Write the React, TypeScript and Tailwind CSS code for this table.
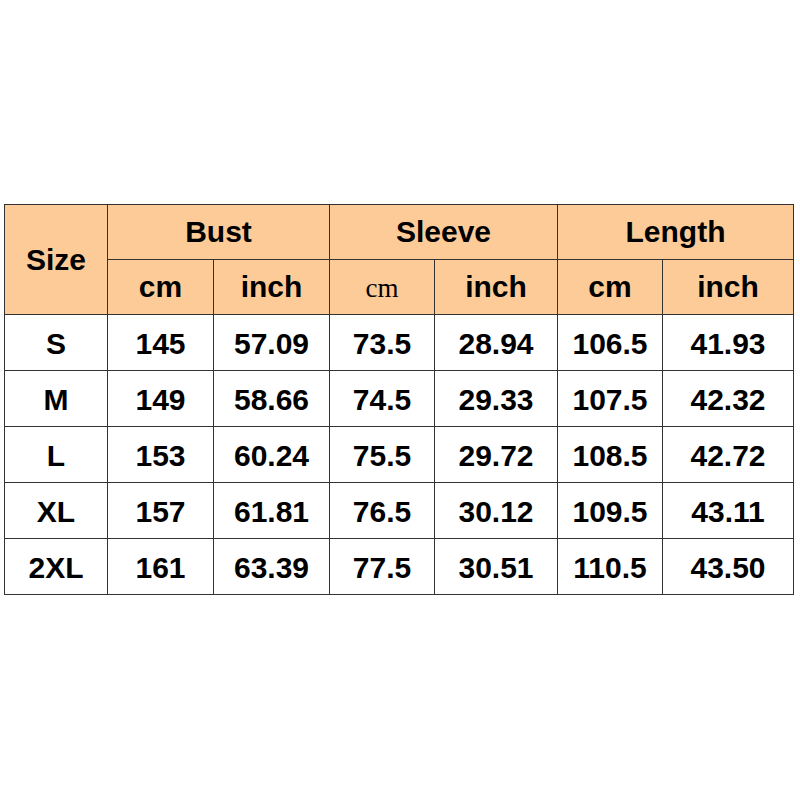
const rows = [
  ['S', '145', '57.09', '73.5', '28.94', '106.5', '41.93'],
  ['M', '149', '58.66', '74.5', '29.33', '107.5', '42.32'],
  ['L', '153', '60.24', '75.5', '29.72', '108.5', '42.72'],
  ['XL', '157', '61.81', '76.5', '30.12', '109.5', '43.11'],
  ['2XL', '161', '63.39', '77.5', '30.51', '110.5', '43.50'],
]

const cell = 'border border-[#333333] text-center align-middle p-0'

export default function App() {
  return (
    <div className="w-[800px] h-[800px] bg-white pt-[204px] pl-[4px] font-['Liberation_Sans',Arial,sans-serif] font-bold text-black">
      <table className="table-fixed border-collapse w-[789px] text-[30px] leading-none">
        <colgroup>
          <col className="w-[103px]" />
          <col className="w-[106px]" />
          <col className="w-[116px]" />
          <col className="w-[105px]" />
          <col className="w-[123px]" />
          <col className="w-[105px]" />
          <col className="w-[131px]" />
        </colgroup>
        <thead className="bg-[#fccb98]">
          <tr className="h-[55px]">
            <th rowSpan={2} className={cell}>Size</th>
            <th colSpan={2} className={cell}>Bust</th>
            <th colSpan={2} className={cell}>Sleeve</th>
            <th colSpan={2} className={cell}>Length</th>
          </tr>
          <tr className="h-[55px]">
            <th className={cell}>cm</th>
            <th className={cell}>inch</th>
            <th className={`${cell} font-['Liberation_Serif',serif] font-normal text-[27px] pt-[3px]`}>cm</th>
            <th className={cell}>inch</th>
            <th className={cell}>cm</th>
            <th className={cell}>inch</th>
          </tr>
        </thead>
        <tbody>
          {rows.map((r) => (
            <tr key={r[0]} className="h-[56px]">
              {r.map((v, i) => (
                <td key={i} className={`${cell} pt-[3px]`}>{v}</td>
              ))}
            </tr>
          ))}
        </tbody>
      </table>
    </div>
  )
}
